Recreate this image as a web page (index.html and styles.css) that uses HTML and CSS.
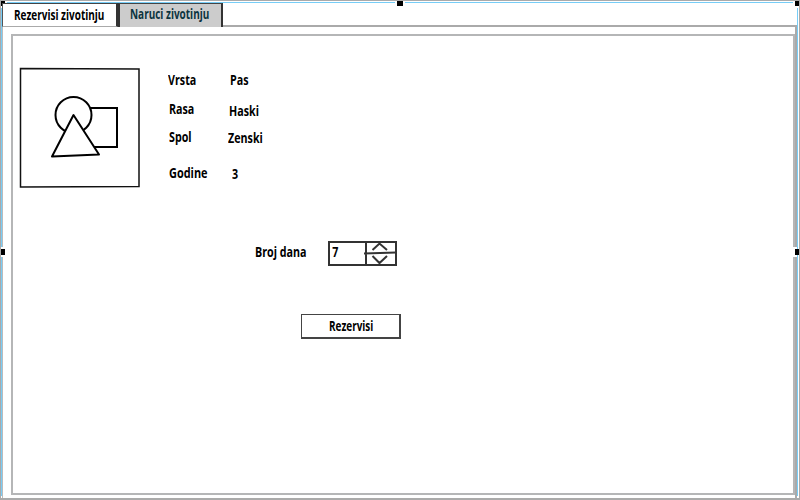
FILE: index.html
```html
<!DOCTYPE html>
<html lang="bs">
<head>
<meta charset="utf-8">
<title>Rezervisi zivotinju</title>
<link rel="stylesheet" href="styles.css">
</head>
<body>
<div class="window">
  <nav class="tabs">
    <div class="tab active"><span class="t">Rezervisi zivotinju</span></div>
    <div class="tab inactive"><span class="t">Naruci zivotinju</span></div>
  </nav>
  <main class="frame">
    <section class="panel">
      <div class="details">
        <svg class="photo" width="122" height="122" viewBox="0 0 122 122" fill="none" stroke="#000" stroke-width="2">
          <path d="M1.500 2.500L120 3V120.500L1.500 121Z" stroke="#111" stroke-width="1.5"/>
          <path d="M66 42H98V81H70"/>
          <circle cx="54.5" cy="49" r="18" fill="#fff"/>
          <path d="M54.500 49L33 90.500L80 88.500Z" fill="#fff" stroke-linejoin="round"/>
        </svg>
        <dl class="facts">
          <div class="row vrsta"><dt><span class="t">Vrsta</span></dt><dd><span class="t">Pas</span></dd></div>
          <div class="row rasa"><dt><span class="t">Rasa</span></dt><dd><span class="t">Haski</span></dd></div>
          <div class="row spol"><dt><span class="t">Spol</span></dt><dd><span class="t">Zenski</span></dd></div>
          <div class="row godine"><dt><span class="t">Godine</span></dt><dd><span class="t">3</span></dd></div>
        </dl>
      </div>
      <div class="days">
        <label><span class="t">Broj dana</span></label>
        <div class="spinner">
          <span class="value t">7</span>
          <svg width="34" height="26" viewBox="0 0 34 26" fill="none" stroke="#333" stroke-width="2">
            <path d="M3 0V25M1 12.500L33 11.500M9.500 9L16.500 2.500L24 9M9.500 15L16.500 22L24 15"/>
          </svg>
        </div>
      </div>
      <button class="reserve"><span class="t">Rezervisi</span></button>
    </section>
  </main>
  <div class="selection">
    <i class="top"></i><i class="left"></i><i class="right"></i>
    <b class="nw"></b><b class="n"></b><b class="ne"></b>
    <b class="w"></b><b class="e"></b>
    <b class="sw"></b><b class="s"></b><b class="se"></b>
  </div>
</div>
</body>
</html>
```
FILE: styles.css
```css
* { box-sizing: border-box; }
body { margin: 0; background: #fff; font: bold 14px/16px "Open Sans", "Noto Sans", sans-serif; color: #000; }
.window { position: relative; width: 800px; height: 500px; overflow: hidden; border: 1px solid #aaa; border-bottom: 2px solid #aaa; padding: 2px 0 0 1px; }
.t { display: inline-block; white-space: nowrap; transform-origin: 0 50%; transform: scaleX(.765); }
.tabs { display: flex; height: 22px; }
.tab { height: 24px; border-top: 1px solid #444; position: relative; z-index: 1; }
.tab .t { transform: scaleX(.713); }
.active { width: 116px; padding: 3px 0 0 11px; background: #fff; border-left: 1px solid #555; border-right: 2px solid #333; border-bottom: 1px solid #aaa; }
.inactive { width: 105px; padding: 2px 0 0 10px; background: #ccc; color: #0c3440; border: 2px solid #333; border-top: 1px solid #444; border-bottom: 0; }
.frame { width: 795px; height: 474px; border-top: 2px solid #aaa; border-right: 2px solid #aaa; border-left: 1px solid #bbb; padding: 7px 0 0 8px; }
.panel { width: 784px; height: 461px; border: 2px solid #b5b6b7; padding: 30px 0 0 6px; }
.details { display: flex; height: 138px; }
.photo { display: block; }
.facts { margin: 6px 0 0 27px; }
.row { display: flex; height: 16px; }
dt { width: 62px; margin: 0; }
dd { margin: 0; }
.rasa { margin-top: 13px; padding-left: 1px; }
.rasa dt { width: 60px; }
.spol dt { width: 59px; }
.godine dt { width: 63px; }
.godine dt .t { transform: scaleX(.78); }
.rasa dd { padding-top: 2px; }
.spol { margin-top: 12px; padding-left: 1px; }
.spol dd { padding-top: 1px; }
.godine { margin-top: 20px; padding-left: 1px; }
.godine dd { padding-top: 1px; }
.days { display: flex; margin: 37px 0 0 236px; height: 26px; }
.days label { width: 73px; padding-top: 3px; }
.spinner { width: 69px; height: 25px; border: 2px solid #333; display: flex; }
.value { flex: none; width: 36px; height: 16px; margin-top: 1px; padding-left: 3px; }
.spinner svg { flex: none; margin: -2px 0 0 -3px; }
.reserve { display: block; width: 100px; height: 25px; margin: 47px 0 0 282px; padding: 0 0 0 27px; text-align: left; font: inherit; color: #000; background: #fff; border: 1px solid #444; border-right-width: 2px; border-bottom-width: 2px; }
.reserve .t { transform: scaleX(.71); display: block; }
.selection { position: absolute; inset: -1px 0 0 -1px; }
.selection i { position: absolute; background: #77cdf7; }
.selection .top { left: 7px; right: 6px; top: 2px; height: 1px; }
.selection .left { left: 1px; top: 8px; bottom: 2px; width: 1px; }
.selection .right { right: 1px; top: 8px; bottom: 2px; width: 1px; }
.selection b { position: absolute; width: 4px; height: 6px; background: #000; }
.selection .nw { left: 1px; top: 1px; height: 5px; box-shadow: 1px 1px 0 1px #fff; }
.selection .n { left: 397px; top: 1px; width: 6px; height: 5px; box-shadow: 2px 1px 0 #fff, -2px 1px 0 #fff; }
.selection .ne { left: 795px; top: 1px; height: 5px; }
.selection .w { left: 1px; top: 249px; box-shadow: 0 2px 0 #fff, 0 -2px 0 #fff; }
.selection .e { left: 795px; top: 249px; box-shadow: -2px 2px 0 #fff, -2px -2px 0 #fff; }
.selection .sw { left: 1px; top: 498px; height: 1px; box-shadow: 2px 0 0 #fff; }
.selection .s { left: 397px; top: 498px; width: 6px; height: 1px; box-shadow: 2px 0 0 #fff, -2px 0 0 #fff; }
.selection .se { left: 795px; top: 498px; height: 1px; box-shadow: -2px 0 0 #fff; }
```
